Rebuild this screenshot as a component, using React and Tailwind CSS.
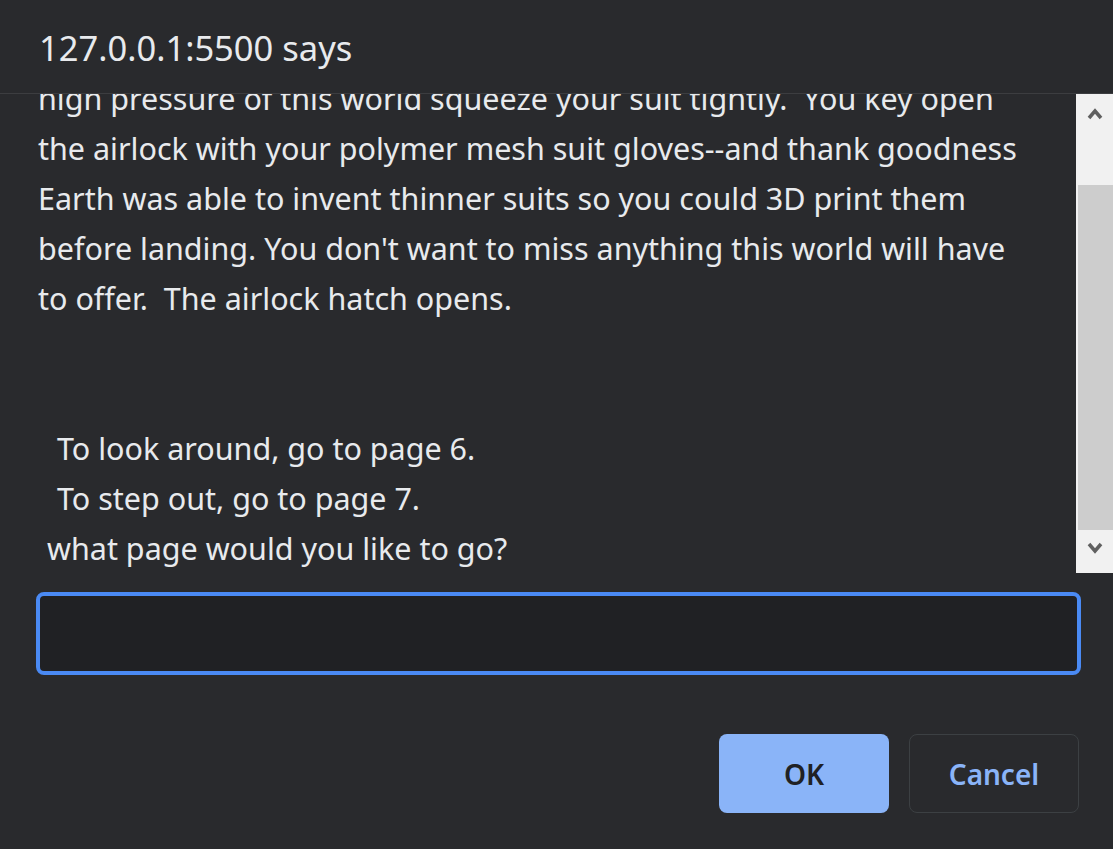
import React from "react";

const lines = [
  "high pressure of this world squeeze your suit tightly.  You key open",
  "the airlock with your polymer mesh suit gloves--and thank goodness",
  "Earth was able to invent thinner suits so you could 3D print them",
  "before landing. You don't want to miss anything this world will have",
  "to offer.  The airlock hatch opens.",
];

export default function App() {
  return (
    <div
      className="w-[1113px] h-[849px] bg-[#292a2d] text-[#e8eaed] flex flex-col overflow-hidden"
      style={{ fontFamily: '"Noto Sans", "Open Sans", sans-serif' }}
    >
      <div className="h-[94px] shrink-0 flex items-center pl-[39px] pt-[2px] text-[34.5px] border-b border-[#3c3d40]">
        127.0.0.1:5500 says
      </div>
      <div className="h-[479px] shrink-0 flex overflow-hidden">
        <div className="flex-1 overflow-hidden pl-[38px]">
          <div className="mt-[-21px] text-[30.5px] leading-[50px] whitespace-pre">
            {lines.map((l, i) => (
              <div key={i}>{l}</div>
            ))}
            <div>&nbsp;</div>
            <div>&nbsp;</div>
            <div className="pl-[19px]">To look around, go to page 6.</div>
            <div className="pl-[19px]">To step out, go to page 7.</div>
            <div className="pl-[9px]">what page would you like to go?</div>
          </div>
        </div>
        <div className="w-[37px] shrink-0 bg-[#f1f1f1] flex flex-col">
          <div className="h-[91px] flex justify-center pt-[14px]">
            <svg width="16" height="12" viewBox="0 0 16 12">
              <path d="M2 10 L8 3 L14 10" stroke="#606060" strokeWidth="3.5" fill="none" />
            </svg>
          </div>
          <div className="h-[345px] ml-[2px] bg-[#cdcdcd]" />
          <div className="flex-1 flex justify-center pt-[12px]">
            <svg width="16" height="12" viewBox="0 0 16 12">
              <path d="M2 2 L8 9 L14 2" stroke="#606060" strokeWidth="3.5" fill="none" />
            </svg>
          </div>
        </div>
      </div>
      <div className="pt-[19px] pl-[36px] pr-[32px]">
        <div className="h-[83px] rounded-[8px] border-[4px] border-[#4a8af4] bg-[#202124]" />
      </div>
      <div className="flex justify-end gap-[20px] pt-[59px] pr-[34px]">
        <button className="w-[170px] h-[79px] rounded-[8px] bg-[#8ab4f8] text-[#202124] text-[28px] font-semibold">
          OK
        </button>
        <button className="w-[170px] h-[79px] rounded-[8px] border border-[#3c4043] text-[#8ab4f8] text-[28px] font-semibold">
          Cancel
        </button>
      </div>
    </div>
  );
}
